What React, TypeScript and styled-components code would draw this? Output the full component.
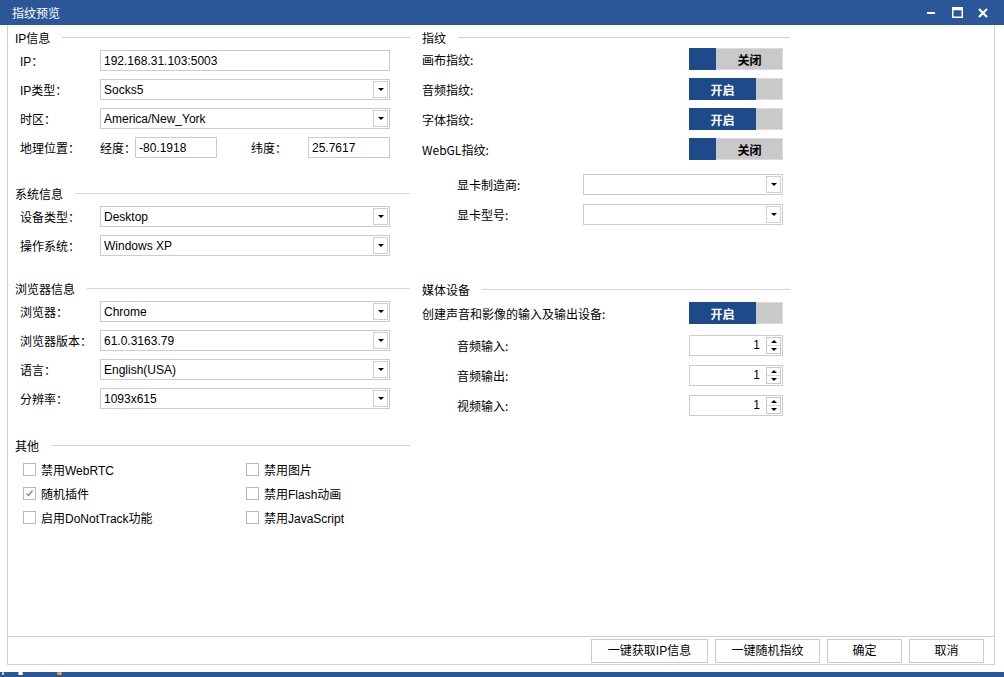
import React from "react";
import styled, { createGlobalStyle } from "styled-components";

const GlobalStyle = createGlobalStyle`
	html, body {
		margin: 0;
		padding: 0;
		background: #ffffff;
	}
	body {
		font-family: "Liberation Sans", "Noto Sans CJK SC", sans-serif;
		font-size: 12px;
		color: #000;
	}
	* {
		box-sizing: border-box;
	}
`;

const Window = styled.div`
	width: 1004px;
	height: 677px;
	display: flex;
	flex-direction: column;
	background: #fff;
	overflow: hidden;
`;

const TitleBar = styled.div`
	height: 25px;
	flex-shrink: 0;
	display: flex;
	align-items: center;
	padding: 0 8px 0 12px;
	background: #2b579a;
	color: #fff;
`;

const Title = styled.span`
	flex: 1;
	font-size: 12px;
	font-family: "Noto Sans CJK SC", sans-serif;
`;

const WinButton = styled.div`
	width: 26px;
	height: 25px;
	display: flex;
	align-items: center;
	justify-content: center;
`;

const Body = styled.div`
	flex: 1;
	display: flex;
	flex-direction: column;
	padding: 0 9px 7px 7px;
`;

const Frame = styled.div`
	flex: 1;
	display: flex;
	flex-direction: column;
	border: 1px solid #cfcfcf;
	border-top: none;
`;

const Content = styled.div`
	flex: 1;
	display: flex;
	gap: 12px;
	padding: 4px 0 0 7px;
`;

const Column = styled.div<{ $width: number }>`
	width: ${(p) => p.$width}px;
	display: flex;
	flex-direction: column;
`;

const Section = styled.div<{ $after?: number }>`
	margin-bottom: ${(p) => p.$after ?? 0}px;
`;

const SectionHeader = styled.div`
	height: 17px;
	display: flex;
	align-items: center;
	gap: 12px;
	&::after {
		content: "";
		flex: 1;
		height: 1px;
		background: #d4d4d4;
	}
`;

const FormRow = styled.div`
	height: 29px;
	display: flex;
	align-items: center;
	padding-left: 5px;
`;

const Label = styled.span<{ $width?: number }>`
	width: ${(p) => p.$width ?? 80}px;
	flex-shrink: 0;
	white-space: nowrap;
`;

const Field = styled.div<{ $width?: number; $ml?: number }>`
	width: ${(p) => p.$width ?? 290}px;
	height: 21px;
	margin-left: ${(p) => p.$ml ?? 0}px;
	display: flex;
	align-items: center;
	border: 1px solid #cccccc;
	background: #fff;
	padding-left: 3px;
`;

const FieldText = styled.span`
	flex: 1;
	white-space: nowrap;
	overflow: hidden;
`;

const DropButton = styled.div`
	width: 15px;
	height: 17px;
	margin-right: 1px;
	border: 1px solid #d0d0d0;
	display: flex;
	align-items: center;
	justify-content: center;
	&::after {
		content: "";
		border-left: 3px solid transparent;
		border-right: 3px solid transparent;
		border-top: 3px solid #000;
	}
`;

const CheckGrid = styled.div`
	display: grid;
	grid-template-columns: 223px 1fr;
	grid-auto-rows: 24px;
	padding: 3px 0 0 8px;
`;

const CheckItem = styled.label`
	display: flex;
	align-items: center;
	gap: 5px;
`;

const CheckBox = styled.span`
	width: 13px;
	height: 13px;
	border: 1px solid #b8b8b8;
	background: #fff;
	display: flex;
	align-items: center;
	justify-content: center;
`;

const RightLabel = styled.span<{ $width?: number; $indent?: number }>`
	width: ${(p) => p.$width ?? 0}px;
	padding-left: ${(p) => p.$indent ?? 0}px;
	flex: ${(p) => (p.$width ? "none" : 1)};
	font-family: "Noto Sans CJK SC", sans-serif;
	white-space: nowrap;
`;

const ControlList = styled.div<{ $top?: number }>`
	margin-top: ${(p) => p.$top ?? 0}px;
`;

const ControlRow = styled.div`
	height: 30px;
	display: flex;
	align-items: center;
	padding-right: 7px;
`;

const Toggle = styled.div`
	width: 94px;
	height: 22px;
	margin-left: auto;
	display: flex;
	background: #c9c9c9;
	box-shadow: inset 0 0 0 1px #dadada;
`;

const ToggleKnob = styled.div<{ $on: boolean }>`
	width: ${(p) => (p.$on ? 67 : 27)}px;
	background: #1c4a8a;
	color: #fff;
	font-weight: bold;
	font-family: "Noto Sans CJK SC", sans-serif;
	display: flex;
	align-items: center;
	justify-content: center;
`;

const ToggleText = styled.div`
	flex: 1;
	display: flex;
	align-items: center;
	justify-content: center;
	font-weight: bold;
	font-family: "Noto Sans CJK SC", sans-serif;
`;

const Spinner = styled.div`
	width: 94px;
	height: 21px;
	margin-left: auto;
	display: flex;
	align-items: center;
	border: 1px solid #cccccc;
`;

const SpinValue = styled.span`
	flex: 1;
	text-align: right;
	padding-right: 6px;
`;

const SpinButtons = styled.div`
	width: 15px;
	height: 17px;
	margin-right: 1px;
	border: 1px solid #c8c8c8;
	display: flex;
	flex-direction: column;
`;

const SpinHalf = styled.div<{ $up?: boolean }>`
	flex: 1;
	display: flex;
	align-items: center;
	justify-content: center;
	border-bottom: ${(p) => (p.$up ? "1px solid #d8d8d8" : "none")};
	&::after {
		content: "";
		border-left: 3px solid transparent;
		border-right: 3px solid transparent;
		${(p) =>
			p.$up ? "border-bottom: 3px solid #000;" : "border-top: 3px solid #000;"}
	}
`;

const Footer = styled.div`
	height: 28px;
	flex-shrink: 0;
	border-top: 1px solid #cfcfcf;
	display: flex;
	justify-content: flex-end;
	align-items: flex-start;
	gap: 7px;
	padding: 2px 10px 0 0;
`;

const FooterButton = styled.button<{ $width: number }>`
	all: unset;
	box-sizing: border-box;
	width: ${(p) => p.$width}px;
	height: 24px;
	border: 1px solid #cccccc;
	background: #fff;
	text-align: center;
	line-height: 22px;
	font-size: 12px;
	font-family: "Liberation Sans", "Noto Sans CJK SC", sans-serif;
`;

const Taskbar = styled.div`
	height: 5px;
	flex-shrink: 0;
	background: #2b579a;
	display: flex;
	align-items: flex-start;
	gap: 14px;
	padding-left: 2px;
`;

const TrayMark = styled.span<{ $color: string; $width: number }>`
	width: ${(p) => p.$width}px;
	height: 3px;
	background: ${(p) => p.$color};
	border-radius: 2px;
`;

const SelectField = ({ value, width }: { value: string; width?: number }) => (
	<Field $width={width}>
		<FieldText>{value}</FieldText>
		<DropButton />
	</Field>
);

const SwitchControl = ({ on }: { on: boolean }) => (
	<Toggle>
		<ToggleKnob $on={on}>{on ? "开启" : ""}</ToggleKnob>
		<ToggleText>{on ? "" : "关闭"}</ToggleText>
	</Toggle>
);

const CheckMark = () => (
	<svg width="9" height="9" viewBox="0 0 9 9">
		<path d="M1.5 4.5 L3.5 6.5 L7.5 1.5" fill="none" stroke="#8a8a8a" strokeWidth="1.4" />
	</svg>
);

const systemRows = [
	{ label: "设备类型：", value: "Desktop" },
	{ label: "操作系统：", value: "Windows XP" },
];

const browserRows = [
	{ label: "浏览器：", value: "Chrome" },
	{ label: "浏览器版本：", value: "61.0.3163.79" },
	{ label: "语言：", value: "English(USA)" },
	{ label: "分辨率：", value: "1093x615" },
];

const checks = [
	{ text: "禁用WebRTC", checked: false },
	{ text: "禁用图片", checked: false },
	{ text: "随机插件", checked: true },
	{ text: "禁用Flash动画", checked: false },
	{ text: "启用DoNotTrack功能", checked: false },
	{ text: "禁用JavaScript", checked: false },
];

const fingerprints = [
	{ label: "画布指纹:", on: false },
	{ label: "音频指纹:", on: true },
	{ label: "字体指纹:", on: true },
	{ label: "WebGL指纹:", on: false },
];

const mediaCounts = ["音频输入:", "音频输出:", "视频输入:"];

export default function App() {
	return (
		<>
			<GlobalStyle />
			<Window>
				<TitleBar>
					<Title>指纹预览</Title>
					<WinButton>
						<svg width="10" height="10" viewBox="0 0 10 10">
							<rect x="1" y="4" width="8" height="2" fill="#fff" />
						</svg>
					</WinButton>
					<WinButton>
						<svg width="11" height="11" viewBox="0 0 11 11">
							<rect x="0.75" y="0.75" width="9.5" height="9.5" fill="none" stroke="#fff" strokeWidth="1.5" />
							<rect x="0.75" y="0.75" width="9.5" height="2.5" fill="#fff" />
						</svg>
					</WinButton>
					<WinButton>
						<svg width="10" height="10" viewBox="0 0 10 10">
							<path d="M1 1 L9 9 M9 1 L1 9" stroke="#fff" strokeWidth="2.2" />
						</svg>
					</WinButton>
				</TitleBar>
				<Body>
					<Frame>
						<Content>
							<Column $width={395}>
								<Section $after={23}>
									<SectionHeader>IP信息</SectionHeader>
									<FormRow>
										<Label>IP：</Label>
										<Field>
											<FieldText>192.168.31.103:5003</FieldText>
										</Field>
									</FormRow>
									<FormRow>
										<Label>IP类型：</Label>
										<SelectField value="Socks5" />
									</FormRow>
									<FormRow>
										<Label>时区：</Label>
										<SelectField value="America/New_York" />
									</FormRow>
									<FormRow>
										<Label>地理位置：</Label>
										<Label $width={35}>经度：</Label>
										<Field $width={82}>
											<FieldText>-80.1918</FieldText>
										</Field>
										<Label $width={57} style={{ marginLeft: 34 }}>
											纬度：
										</Label>
										<Field $width={82}>
											<FieldText>25.7617</FieldText>
										</Field>
									</FormRow>
								</Section>
								<Section $after={20}>
									<SectionHeader>系统信息</SectionHeader>
									{systemRows.map((r) => (
										<FormRow key={r.label}>
											<Label>{r.label}</Label>
											<SelectField value={r.value} />
										</FormRow>
									))}
								</Section>
								<Section $after={24}>
									<SectionHeader>浏览器信息</SectionHeader>
									{browserRows.map((r) => (
										<FormRow key={r.label}>
											<Label>{r.label}</Label>
											<SelectField value={r.value} />
										</FormRow>
									))}
								</Section>
								<Section>
									<SectionHeader>其他</SectionHeader>
									<CheckGrid>
										{checks.map((c) => (
											<CheckItem key={c.text}>
												<CheckBox>{c.checked && <CheckMark />}</CheckBox>
												{c.text}
											</CheckItem>
										))}
									</CheckGrid>
								</Section>
							</Column>
							<Column $width={368}>
								<Section $after={52}>
									<SectionHeader>指纹</SectionHeader>
									<ControlList $top={-2}>
										{fingerprints.map((f) => (
											<ControlRow key={f.label}>
												<RightLabel>{f.label}</RightLabel>
												<SwitchControl on={f.on} />
											</ControlRow>
										))}
									</ControlList>
									<ControlList $top={5}>
										<ControlRow>
											<RightLabel $width={161} $indent={35}>
												显卡制造商:
											</RightLabel>
											<SelectField value="" width={200} />
										</ControlRow>
										<ControlRow>
											<RightLabel $width={161} $indent={35}>
												显卡型号:
											</RightLabel>
											<SelectField value="" width={200} />
										</ControlRow>
									</ControlList>
								</Section>
								<Section>
									<SectionHeader>媒体设备</SectionHeader>
									<ControlRow>
										<RightLabel>创建声音和影像的输入及输出设备:</RightLabel>
										<SwitchControl on />
									</ControlRow>
									<ControlList $top={2}>
										{mediaCounts.map((m) => (
											<ControlRow key={m}>
												<RightLabel $indent={35}>{m}</RightLabel>
												<Spinner>
													<SpinValue>1</SpinValue>
													<SpinButtons>
														<SpinHalf $up />
														<SpinHalf />
													</SpinButtons>
												</Spinner>
											</ControlRow>
										))}
									</ControlList>
								</Section>
							</Column>
						</Content>
						<Footer>
							<FooterButton $width={117}>一键获取IP信息</FooterButton>
							<FooterButton $width={105}>一键随机指纹</FooterButton>
							<FooterButton $width={75}>确定</FooterButton>
							<FooterButton $width={75}>取消</FooterButton>
						</Footer>
					</Frame>
				</Body>
				<Taskbar>
					<TrayMark $color="#dfe6f0" $width={2} />
					<TrayMark $color="#ffffff" $width={5} />
					<TrayMark $color="#e8a23a" $width={5} style={{ marginLeft: 20 }} />
				</Taskbar>
			</Window>
		</>
	);
}
